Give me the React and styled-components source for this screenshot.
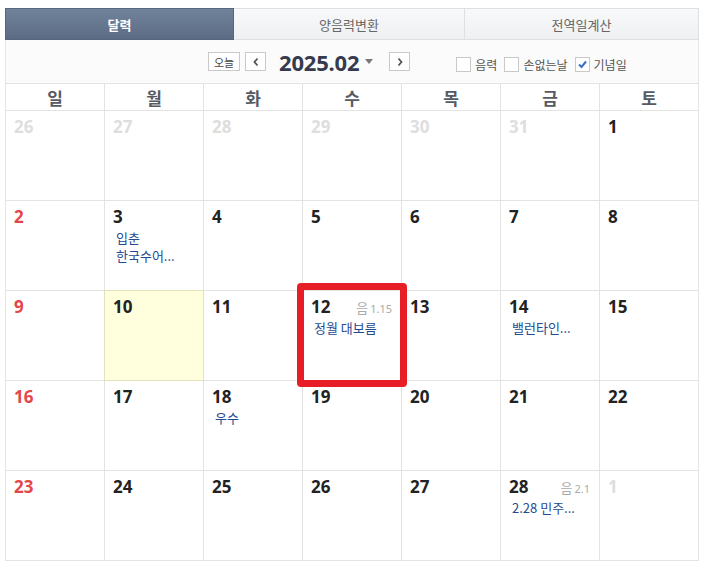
import React from "react";
import styled, { createGlobalStyle } from "styled-components";

const Global = createGlobalStyle`
  html, body { margin: 0; padding: 0; background: #fff; }
  body { font-family: "Noto Sans", "Noto Sans CJK KR", sans-serif; }
`;

const Wrap = styled.div`
  width: 694px;
  margin: 8px 0 0 5px;
`;

const Tabs = styled.div`
  display: grid;
  grid-template-columns: 229px 231px 1fr;
  height: 32px;
`;

const Tab = styled.div`
  display: flex;
  align-items: center;
  justify-content: center;
  font-size: 13px;
  font-family: "Noto Sans CJK KR", sans-serif;
  border: 1px solid ${(p) => (p.$active ? "#56667d" : "#dcdfe3")};
  border-left-width: ${(p) => (p.$first ? "1px" : "0")};
  background: ${(p) =>
    p.$active
      ? "linear-gradient(#71839b, #5b6c84)"
      : "linear-gradient(#f8f9fa, #eef0f2)"};
  color: ${(p) => (p.$active ? "#fff" : "#666")};
  font-weight: ${(p) => (p.$active ? 700 : 400)};
`;

const Controls = styled.div`
  position: relative;
  height: 44px;
  border-left: 1px solid #e3e3e3;
  border-right: 1px solid #e3e3e3;
  border-bottom: 1px solid #e3e3e3;
  background: #fbfbfb;
  display: flex;
  align-items: center;
  padding-left: 202px;
  box-sizing: border-box;
`;

const SmallBtn = styled.div`
  box-sizing: border-box;
  height: 19px;
  min-width: ${(p) => p.$w || 20}px;
  padding: 0 3px;
  border: 1px solid #c9c9c9;
  background: #fff;
  display: flex;
  align-items: center;
  justify-content: center;
  font-size: 11px;
  color: #444;
  margin-right: ${(p) => p.$mr || 0}px;
  font-family: "Noto Sans CJK KR", sans-serif;
`;

const Month = styled.div`
  display: flex;
  align-items: center;
  font-family: "Noto Sans", "DejaVu Sans", sans-serif;
  font-size: 22px;
  font-weight: 700;
  color: #353a4e;
  margin: 0 16px 0 13px;
  letter-spacing: -0.2px;
`;

const Caret = styled.span`
  width: 0;
  height: 0;
  border-left: 4px solid transparent;
  border-right: 4px solid transparent;
  border-top: 5px solid #777;
  margin-left: 6px;
`;

const Checks = styled.div`
  display: flex;
  align-items: center;
  margin-left: 46px;
  margin-top: 6px;
  gap: 7px;
`;

const CheckItem = styled.label`
  display: flex;
  align-items: center;
  gap: 4px;
  font-size: 12px;
  color: #555;
  font-family: "Noto Sans CJK KR", sans-serif;
`;

const Box = styled.span`
  width: 13px;
  height: 13px;
  border: 1px solid #c9c9c9;
  background: #fff;
  display: inline-flex;
  align-items: center;
  justify-content: center;
`;

const Grid = styled.div`
  display: grid;
  grid-template-columns: repeat(7, 1fr);
  border-left: 1px solid #e3e3e3;
`;

const Head = styled.div`
  height: 27px;
  box-sizing: border-box;
  border-right: 1px solid #e3e3e3;
  border-bottom: 1px solid #e3e3e3;
  display: flex;
  align-items: center;
  justify-content: center;
  font-family: "Noto Sans CJK KR", sans-serif;
  font-weight: 700;
  font-size: 17px;
  color: #555a63;
`;

const Cell = styled.div`
  position: relative;
  height: 90px;
  box-sizing: border-box;
  border-right: 1px solid ${(p) => (p.$today ? "#e4e2bd" : "#e3e3e3")};
  border-bottom: 1px solid ${(p) => (p.$today ? "#e4e2bd" : "#e3e3e3")};
  background: ${(p) => (p.$today ? "#ffffdd" : "#fff")};
  padding: 5px 8px 0 8px;
  z-index: ${(p) => (p.$hl ? 2 : 0)};
  ${(p) => (p.$today ? "margin-top: -1px; border-top: 1px solid #e4e2bd; height: 91px;" : "")}
  ${(p) => (p.$today ? "margin-left: -1px; border-left: 1px solid #e4e2bd;" : "")}
`;

const Top = styled.div`
  display: flex;
  justify-content: space-between;
  align-items: baseline;
`;

const Num = styled.span`
  font-family: "Noto Sans", "DejaVu Sans", sans-serif;
  font-weight: 700;
  font-size: 17px;
  line-height: 22px;
  color: ${(p) => (p.$other ? "#dedede" : p.$sun ? "#e4474a" : "#222")};
`;

const Lunar = styled.span`
  font-size: 11px;
  color: #aaa;
  font-family: "Noto Sans", "Noto Sans CJK KR", sans-serif;
  margin-right: 1px;
  & b {
    font-weight: 400;
    font-size: 13px;
    font-family: "Noto Sans CJK KR", sans-serif;
    margin-right: 2px;
  }
`;

const Events = styled.div`
  margin-top: 1px;
  padding-left: 3px;
  display: flex;
  flex-direction: column;
`;

const Ev = styled.div`
  font-family: "Noto Sans CJK KR", sans-serif;
  font-size: 13px;
  line-height: 18px;
  color: #234b92;
  white-space: nowrap;
`;

const Highlight = styled.div`
  position: absolute;
  left: -6px;
  top: -8px;
  width: 110px;
  height: 104px;
  box-sizing: border-box;
  border: 7px solid #e81e27;
  border-radius: 4px;
  pointer-events: none;
`;

const Check = () => (
  <svg width="11" height="11" viewBox="0 0 11 11">
    <path d="M2 5.5 L4.5 8 L9 2.5" fill="none" stroke="#3a6fc4" strokeWidth="2" />
  </svg>
);

const Arrow = ({ dir }) => (
  <svg width="8" height="10" viewBox="0 0 8 10">
    <path
      d={dir === "l" ? "M5.5 1.5 L2.5 5 L5.5 8.5" : "M2.5 1.5 L5.5 5 L2.5 8.5"}
      fill="none"
      stroke="#555"
      strokeWidth="1.8"
    />
  </svg>
);

const days = ["일", "월", "화", "수", "목", "금", "토"];

const cells = [
  { n: 26, other: true }, { n: 27, other: true }, { n: 28, other: true },
  { n: 29, other: true }, { n: 30, other: true }, { n: 31, other: true }, { n: 1 },
  { n: 2 }, { n: 3, ev: ["입춘", "한국수어..."] }, { n: 4 }, { n: 5 }, { n: 6 }, { n: 7 }, { n: 8 },
  { n: 9 }, { n: 10, today: true }, { n: 11 },
  { n: 12, lunar: "1.15", ev: ["정월 대보름"], hl: true }, { n: 13 },
  { n: 14, ev: ["밸런타인..."] }, { n: 15 },
  { n: 16 }, { n: 17 }, { n: 18, ev: ["우수"] }, { n: 19 }, { n: 20 }, { n: 21 }, { n: 22 },
  { n: 23 }, { n: 24 }, { n: 25 }, { n: 26 }, { n: 27 },
  { n: 28, lunar: "2.1", ev: ["2.28 민주..."] }, { n: 1, other: true },
];

export default function App() {
  return (
    <Wrap>
      <Global />
      <Tabs>
        <Tab $active $first>달력</Tab>
        <Tab>양음력변환</Tab>
        <Tab>전역일계산</Tab>
      </Tabs>
      <Controls>
        <SmallBtn $w={32} $mr={5}>오늘</SmallBtn>
        <SmallBtn $w={21}><Arrow dir="l" /></SmallBtn>
        <Month>2025.02<Caret /></Month>
        <SmallBtn $w={21}><Arrow dir="r" /></SmallBtn>
        <Checks>
          <CheckItem><Box />음력</CheckItem>
          <CheckItem><Box />손없는날</CheckItem>
          <CheckItem><Box><Check /></Box>기념일</CheckItem>
        </Checks>
      </Controls>
      <Grid>
        {days.map((d) => (
          <Head key={d}>{d}</Head>
        ))}
        {cells.map((c, i) => (
          <Cell key={i} $today={c.today} $hl={c.hl}>
            <Top>
              <Num $other={c.other} $sun={i % 7 === 0}>{c.n}</Num>
              {c.lunar && (
                <Lunar><b>음</b>{c.lunar}</Lunar>
              )}
            </Top>
            {c.ev && (
              <Events>
                {c.ev.map((e) => (
                  <Ev key={e}>{e}</Ev>
                ))}
              </Events>
            )}
            {c.hl && <Highlight />}
          </Cell>
        ))}
      </Grid>
    </Wrap>
  );
}
